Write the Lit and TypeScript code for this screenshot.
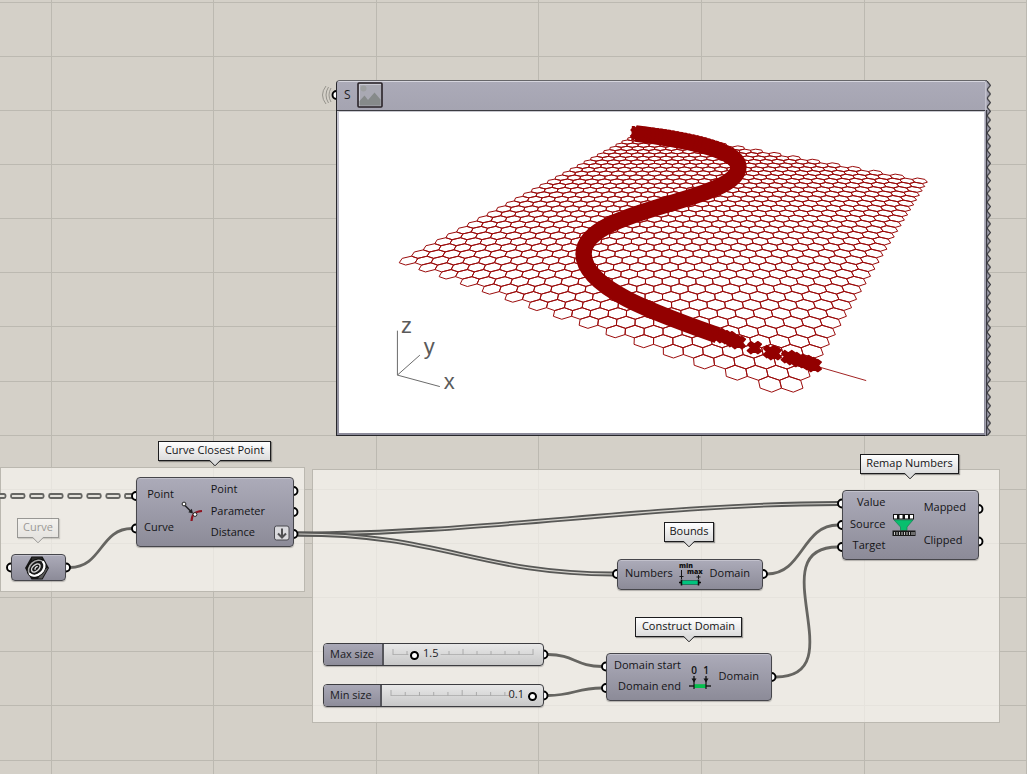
import { LitElement, html, svg, css } from "lit";
import { customElement, property } from "lit/decorators.js";
import { styleMap } from "lit/directives/style-map.js";

type Pt = [number, number];

/* Least-squares plane-to-screen projection through pairs of world and screen points. */
function projection(pairs: [Pt, Pt][]): (p: Pt) => Pt {
  const m: number[][] = Array.from({ length: 8 }, () => new Array(9).fill(0));
  const add = (row: number[]) => {
    for (let r = 0; r < 8; r++) for (let c = 0; c < 9; c++) m[r][c] += row[r] * row[c];
  };
  const K = 1 / 50;
  for (const [[wx, wy], [sx, sy]] of pairs) {
    const x = wx * K;
    const y = wy * K;
    const u = (sx - 660) / 300;
    const v = (sy - 260) / 300;
    add([x, y, 1, 0, 0, 0, -u * x, -u * y, u]);
    add([0, 0, 0, x, y, 1, -v * x, -v * y, v]);
  }
  for (let c = 0; c < 8; c++) {
    let best = c;
    for (let r = c + 1; r < 8; r++) if (Math.abs(m[r][c]) > Math.abs(m[best][c])) best = r;
    [m[c], m[best]] = [m[best], m[c]];
    for (let r = 0; r < 8; r++) {
      if (r === c) continue;
      const f = m[r][c] / m[c][c];
      for (let k = c; k < 9; k++) m[r][k] -= f * m[c][k];
    }
  }
  const h = m.map((row, i) => row[8] / row[i]);
  return ([wx, wy]) => {
    const x = wx * K;
    const y = wy * K;
    const w = h[6] * x + h[7] * y + 1;
    return [660 + (300 * (h[0] * x + h[1] * y + h[2])) / w, 260 + (300 * (h[3] * x + h[4] * y + h[5])) / w];
  };
}

const COLS = 30;
const ROWS = 30;
const S3 = Math.sqrt(3);

/* Lowest vertices of the even columns along the near edge. */
const nearEdge: Pt[] = [
  [406, 265],
  [425.7, 272],
  [446, 279.3],
  [467.3, 287],
  [490, 294.3],
  [513.3, 302.7],
  [537.7, 311.3],
  [562.3, 320],
  [588.7, 328.7],
  [615.7, 338.7],
  [644.3, 348.3],
  [674.3, 358.7],
  [705.3, 369.7],
  [737.7, 380.7],
  [771.7, 392.7],
];

/* Outer vertices of the last column: row number and screen point. */
const farRight: [number, Pt][] = [
  [0, [803.3, 388]],
  [3, [823.3, 355.3]],
  [5, [836, 334.7]],
  [7, [847, 316.3]],
  [10, [862.3, 291.3]],
  [12, [871.7, 276.3]],
  [15, [884, 254.7]],
  [18, [895.3, 237]],
  [22, [909.3, 215.3]],
  [29, [928.7, 182.7]],
];

/* Highest points of the odd columns along the far edge. */
const farEdge: [number, Pt][] = [
  [27, [900, 175.5]],
  [23, [856.7, 167.3]],
  [19, [815, 159.7]],
  [15, [776.7, 152.5]],
  [9, [725, 143.5]],
];

const project = projection([
  [[0.5, 0], [398.7, 262.7]],
  ...nearEdge.map((s, k): [Pt, Pt] => [[1.5 + 3 * k, 0], s]),
  ...farRight.map(([j, s]): [Pt, Pt] => [[45.5, S3 * (j + 1)], s]),
  ...farEdge.map(([c, s]): [Pt, Pt] => [[1 + 1.5 * c, S3 * (ROWS + 0.5)], s]),
]);

function hexMesh(): string {
  let d = "";
  for (let i = 0; i < COLS; i++) {
    for (let j = 0; j < ROWS; j++) {
      const cx = 1 + 1.5 * i;
      const cy = S3 * (j + 0.5) + (i % 2 ? S3 / 2 : 0);
      const pts = [0, 1, 2, 3, 4, 5].map((k) => {
        const a = (k * Math.PI) / 3;
        const [x, y] = project([cx + Math.cos(a), cy + Math.sin(a)]);
        return `${x.toFixed(1)} ${y.toFixed(1)}`;
      });
      d += `M${pts.join("L")}Z`;
    }
  }
  return d;
}

/* A cross shaped cluster left by one oversized cell. */
function cluster(x: number, y: number): string {
  const arms: Pt[] = [
    [-6.5, -3],
    [-3.5, -6],
    [0, -3.5],
    [3.5, -6],
    [7, -3.5],
    [4, 0],
    [7, 3.5],
    [3.5, 6],
    [0, 3.5],
    [-3.5, 6],
    [-7, 3],
    [-3.5, 0],
  ];
  return `M${arms.map(([a, b]) => `${x + a} ${y + b}`).join("L")}Z`;
}

@customElement("gh-viewport")
export class GhViewport extends LitElement {
  static styles = css`
    :host {
      display: block;
      position: relative;
    }
    .frame {
      margin-right: 4px;
      border: 1px solid #26262b;
      border-top-color: #66666a;
      border-radius: 4px 0 0 0;
      background: #9b9aa8;
      overflow: hidden;
    }
    .head {
      display: flex;
      align-items: center;
      gap: 6px;
      height: 25px;
      padding: 0 7px 3px;
      border-top: 1px solid #d6d5de;
      border-bottom: 1px solid #3b3b42;
      background: linear-gradient(#abaab8, #a5a4b1);
      font-size: 12px;
      line-height: 16px;
      color: #1c1c20;
    }
    .head svg {
      display: block;
      width: 26px;
      height: 26px;
    }
    .view {
      padding: 0 2px 2px;
      border-top: 1px solid #c8c8cf;
      background: linear-gradient(#c8c7d3, #8c8b9a);
    }
    .scene {
      display: block;
      width: 100%;
      background: #fff;
    }
    .teeth {
      position: absolute;
      top: 1px;
      right: 0;
      width: 6px;
      height: calc(100% - 1px);
    }
    .axis {
      font: 22px "Liberation Sans", Arial, sans-serif;
      fill: #5a5a5a;
    }
  `;

  render() {
    return html`
      <div class="frame">
        <div class="head">
          <span>S</span>
          <svg viewBox="0 0 26 26" aria-hidden="true">
            <rect x="1" y="1" width="24" height="24" rx="1" fill="#a9a9b3" stroke="#2a2328" stroke-width="1.6" />
            <path d="M2.500 24V2.500H24" fill="none" stroke="#c9c9d2" />
            <circle cx="6.500" cy="6.500" r="3" fill="#9d9fa0" />
            <path d="M2.500 19L7.500 13.500 11 18 17.500 10.500 23.500 17.500V23.500H2.500Z" fill="#868a8a" />
          </svg>
        </div>
        <div class="view">
          <svg class="scene" viewBox="339 112 646 321" role="img" aria-label="Hexagon grid preview">
            <path d=${hexMesh()} fill="none" stroke="#9a0a0a" stroke-width="1" stroke-linejoin="round" />
            <path d="M815 366L867 381" stroke="#960a0a" stroke-width="0.9" />
            <path
              d="M636 133.500C672 138 739 148 739 167C739 202 584 208 584 254C584 289 660 315 718 335.500"
              fill="none"
              stroke="#930000"
              stroke-width="16.500"
            />
            <path
              d="M632 133C660 134 700 141 722 150"
              fill="none"
              stroke="#930000"
              stroke-width="14"
              stroke-dasharray="3 1"
            />
            <g fill="#930000" stroke="#930000" stroke-width="1.500" stroke-linejoin="round">
              ${[
                [638, 133],
                [719, 335],
                [724, 337],
                [729, 338],
                [734, 341],
                [739, 343],
                [755, 348],
                [771, 352],
                [775, 354],
                [789, 357],
                [794, 359],
                [800, 361],
                [806, 362],
                [811, 364],
                [815, 366],
              ].map(([x, y]) => svg`<path d=${cluster(x, y)} />`)}
              <path d="M786 353L816 360 818 370 806 368 785 361Z" />
              <path d="M722 331L740 337 742 348 722 342ZM769 348L777 350 777 358 769 356Z" />
            </g>
            <path d="M397.500 331V375.500L440 387M397.500 375.500L420 355.500" fill="none" stroke="#6a6a6a" />
            <text class="axis" x="401" y="333">z</text>
            <text class="axis" x="424" y="354">y</text>
            <text class="axis" x="444" y="389">x</text>
          </svg>
        </div>
      </div>
      <svg class="teeth" aria-hidden="true">
        <defs>
          <pattern id="tooth" width="6" height="8.660" patternUnits="userSpaceOnUse">
            <path d="M0 0H2L5.500 4.330 2 8.660H0Z" fill="#a3a2b0" />
            <path d="M2 0L5.500 4.330 2 8.660" fill="none" stroke="#3a3a3f" stroke-width="1.200" />
          </pattern>
        </defs>
        <rect width="6" height="100%" fill="url(#tooth)" />
        <rect x="1" y="29" width="1.200" height="100%" fill="#3a3a42" />
        <rect y="1" width="1.500" height="28" fill="#c3c2cd" />
      </svg>
    `;
  }
}

@customElement("gh-component")
export class GhComponent extends LitElement {
  @property({ attribute: false }) inputs: string[] = [];
  @property({ attribute: false }) outputs: string[] = [];
  @property({ attribute: false }) icon: unknown = null;
  @property({ type: Boolean }) flatten = false;

  static styles = css`
    :host {
      display: block;
      box-sizing: border-box;
      border: 1px solid #46464b;
      border-radius: 4px;
      background: linear-gradient(#acabb9, #8c8b98);
      box-shadow: inset 0 1px 0 #c2c1cc, 0 1px 1px rgba(0, 0, 0, 0.25);
      color: #141417;
      font-size: 11px;
    }
    .body {
      display: flex;
      align-items: center;
      justify-content: space-between;
      box-sizing: border-box;
      height: 100%;
      padding: 0 12px 3px 7px;
    }
    .column {
      display: flex;
      flex-direction: column;
      align-self: stretch;
    }
    .inputs {
      align-items: flex-end;
    }
    .param {
      display: flex;
      flex: 1;
      align-items: center;
      min-height: 21px;
      line-height: 16px;
    }
    .glyph {
      display: flex;
      margin-top: 2px;
    }
    .glyph svg {
      overflow: visible;
    }
    .flat {
      width: 16px;
      height: 16px;
      margin: 2px -9px 0 19px;
    }
    .single {
      justify-content: center;
      padding: 0 3px 2px 0;
    }
  `;

  render() {
    if (!this.inputs.length) return html`<div class="body single"><span class="glyph">${this.icon}</span></div>`;
    return html`
      <div class="body">
        <div class="column inputs">${this.inputs.map((t) => html`<span class="param">${t}</span>`)}</div>
        <span class="glyph">${this.icon}</span>
        <div class="column">
          ${this.outputs.map(
            (t, i) => html`<span class="param"
              >${t}${this.flatten && i === this.outputs.length - 1
                ? html`<svg class="flat" viewBox="0 0 16 16" aria-hidden="true">
                    <rect x="0.500" y="1" width="14.500" height="14" rx="2" fill="#d9d9dd" stroke="#4a4a50" />
                    <path d="M8 3.500V12M4 8.500L8 12.500 12 8.500" fill="none" stroke="#4f4f52" stroke-width="2" />
                  </svg>`
                : ""}</span
            >`,
          )}
        </div>
      </div>
    `;
  }
}

@customElement("gh-slider")
export class GhSlider extends LitElement {
  @property() label = "";
  @property({ type: Number }) max = 10;
  @property({ type: Number }) value = 0;

  static styles = css`
    :host {
      display: flex;
      box-sizing: border-box;
      border: 1px solid #3c3c40;
      border-radius: 4px;
      background: linear-gradient(#e8e8e8, #c8c8c8);
      box-shadow: 0 1px 1px rgba(0, 0, 0, 0.25);
      color: #1b1b1e;
      font-size: 11px;
      overflow: hidden;
    }
    label {
      display: flex;
      align-items: center;
      padding: 0 8px 2px 6px;
      border-right: 2px solid #55555b;
      background: linear-gradient(#a9a8b6, #8e8d9a);
      white-space: nowrap;
    }
    .track {
      position: relative;
      flex: 1;
      margin: 0 10px 0 9px;
    }
    .ticks {
      display: block;
      width: 100%;
      height: 100%;
      overflow: visible;
    }
    input {
      position: absolute;
      top: 0;
      left: -4px;
      width: calc(100% + 8px);
      height: 100%;
      margin: 0;
      background: none;
      appearance: none;
      -webkit-appearance: none;
    }
    input::-webkit-slider-thumb {
      -webkit-appearance: none;
      box-sizing: border-box;
      width: 9px;
      height: 9px;
      margin-top: 1px;
      border: 2px solid #000;
      border-radius: 50%;
      background: #fff;
    }
    output {
      position: absolute;
      top: 1px;
      line-height: 16px;
      padding: 0 1px;
    }
  `;

  render() {
    const ratio = this.value / this.max;
    const right = ratio > 0.5;
    const gap = (i: number) => {
      const r = i / 10;
      return right ? r > ratio - 0.16 : r > ratio - 0.04 && r < ratio + 0.19;
    };
    const place = right ? { right: `calc(${(1 - ratio) * 100}% + 8px)` } : { left: `calc(${ratio * 100}% + 8px)` };
    const last = right ? "83%" : "100%";
    return html`
      <label for="range">${this.label}</label>
      <div class="track">
        <svg class="ticks" aria-hidden="true">
          <line x1="0" x2=${right ? last : `${ratio * 100 - 4}%`} y1="10.500" y2="10.500" stroke="#b4b4b4" />
          ${right ? "" : svg`<line x1="34%" x2="100%" y1="10.500" y2="10.500" stroke="#b4b4b4" />`}
          ${[0, 1, 2, 3, 4, 5, 6, 7, 8, 9, 10].map((i) =>
            gap(i)
              ? ""
              : svg`<line x1=${`${i * 10}%`} x2=${`${i * 10}%`} y1=${i % 5 ? 7 : 5} y2="11" stroke="#aaaaaa" />`,
          )}
        </svg>
        <input id="range" type="range" min="0" .max=${String(this.max)} step="any" .value=${String(this.value)} />
        <output for="range" style=${styleMap(place)}>${this.value}</output>
      </div>
    `;
  }
}

const closestIcon = svg`<svg width="22" height="22" viewBox="0 0 22 22">
  <path d="M10.500 20C11 13 14 10.500 21 10" fill="none" stroke="#8f1420" stroke-width="2.200"/>
  <path d="M3 3.500L10.500 11" stroke="#1d1d1f" stroke-width="1.400"/>
  <path d="M12 12.500L7.300 11.200 10.800 7.700Z" fill="#1d1d1f"/>
  <circle cx="3" cy="3" r="1.900" fill="#fff" stroke="#222"/>
  <circle cx="14" cy="13.500" r="1.900" fill="#fff" stroke="#222"/>
</svg>`;

const curveIcon = svg`<svg width="26" height="24" viewBox="0 0 26 24">
  <path d="M7.500 0.500H18.500L25 12 18.500 23.500H7.500L1 12Z" fill="#161616"/>
  <path d="M8 1.500H17.500L22 10 8 21Z" fill="#2c2c2c"/>
  <path d="M21 13L24 12 18 22.500 14 22.500Z" fill="#5a5a5a"/>
  <g fill="none" stroke-linecap="round" transform="rotate(-42 12.500 12)">
    <ellipse cx="12.500" cy="12" rx="9.200" ry="7" fill="#1a1a1a" stroke="#0c0c0c" stroke-width="3"/>
    <ellipse cx="12.500" cy="12" rx="9" ry="6.600" stroke="#a8a8a8" stroke-width="1.700"/>
    <path d="M3.500 12A9 6.600 0 0 0 21.500 12" stroke="#fff" stroke-width="2.200"/>
    <ellipse cx="12" cy="11.500" rx="5" ry="3" stroke="#d6d6d6" stroke-width="1.500"/>
    <path d="M10.500 12C11 11 13 10.700 14 11.500" stroke="#f0f0f0" stroke-width="1.200"/>
  </g>
</svg>`;

const boundsIcon = svg`<svg width="26" height="26" viewBox="0 0 26 26">
  <g font-family="Open Sans, sans-serif" font-size="7" font-weight="800" fill="#111">
    <text x="1" y="7">min</text>
    <text x="9" y="13">max</text>
  </g>
  <path d="M3.500 9V18M1.500 15.500H5.500M20.500 14V18M18.500 16H22.500" stroke="#151515"/>
  <path d="M3 19.500H21V23.500H3Z" fill="#00c47e" stroke="#12503c" stroke-width="0.600"/>
  <path d="M3.500 18.500V24.500M20.500 18.500V24.500M1 21.500H4M20 21.500H23" stroke="#0d0d0d" stroke-width="1.500"/>
</svg>`;

const domainIcon = svg`<svg width="22" height="26" viewBox="0 0 22 26">
  <g font-family="Open Sans, sans-serif" font-size="10" font-weight="600" fill="#111" text-anchor="middle">
    <text x="5" y="10">0</text>
    <text x="17" y="10">1</text>
  </g>
  <path d="M5 12V18M17 12V18" stroke="#111" stroke-width="1.300"/>
  <path d="M2.500 14.500H7.500L5 18.500ZM14.500 14.500H19.500L17 18.500Z" fill="#111"/>
  <path d="M0 22H22" stroke="#161616" stroke-width="1.400"/>
  <path d="M5 20.200H17V24H5Z" fill="#05bf4d"/>
  <path d="M5 18V25M17 18V25" stroke="#111" stroke-width="1.200"/>
</svg>`;

const remapIcon = svg`<svg width="24" height="24" viewBox="0 0 24 24">
  <rect x="1" y="1" width="21" height="5.500" fill="#111"/>
  <path d="M2 2H5V5.500H2ZM7.500 2H10.500V5.500H7.500ZM13 2H16V5.500H13ZM18 2H21V5.500H18Z" fill="#fff"/>
  <path d="M2 7H21L15 14V17.500H8.500V14Z" fill="#08bf6e" stroke="#178052" stroke-width="0.700"/>
  <rect x="0.500" y="17.500" width="23" height="5.500" fill="#1a1a1a"/>
  <path d="M2.500 19V22M5 19V22M7.500 19V22M10 19V22M12.500 19V22M15 19V22M17.500 19V22M20 19V22M22 19V22" stroke="#c4c4c4"/>
</svg>`;

const range = (start: number, step: number, count: number) => Array.from({ length: count }, (_, i) => start + i * step);

const px = (left: number, top: number, width?: number, height?: number) =>
  styleMap({
    left: `${left}px`,
    top: `${top}px`,
    ...(width ? { width: `${width}px` } : {}),
    ...(height ? { height: `${height}px` } : {}),
  });

const groups = [
  { x: 0, y: 467, w: 305, h: 125 },
  { x: 312, y: 469, w: 688, h: 254 },
];

const nodes = [
  { x: 136, y: 477, w: 158, h: 70, inputs: ["Point", "Curve"], outputs: ["Point", "Parameter", "Distance"], icon: closestIcon, flatten: true },
  { x: 11, y: 554, w: 55, h: 27, inputs: [], outputs: [], icon: curveIcon },
  { x: 617, y: 559, w: 146, h: 31, inputs: ["Numbers"], outputs: ["Domain"], icon: boundsIcon },
  { x: 606, y: 653, w: 166, h: 48, inputs: ["Domain start", "Domain end"], outputs: ["Domain"], icon: domainIcon },
  { x: 842, y: 490, w: 137, h: 70, inputs: ["Value", "Source", "Target"], outputs: ["Mapped", "Clipped"], icon: remapIcon },
];

const tags = [
  { x: 158, y: 441, w: 113, text: "Curve Closest Point" },
  { x: 17, y: 518, w: 42, text: "Curve", faded: true },
  { x: 664, y: 522, w: 50, text: "Bounds" },
  { x: 635, y: 617, w: 107, text: "Construct Domain" },
  { x: 860, y: 454, w: 99, text: "Remap Numbers" },
];

const ports: Pt[] = [
  [136, 496],
  [136, 528.5],
  [293.5, 491],
  [293.5, 512],
  [293.5, 534],
  [11, 567.5],
  [66, 567.5],
  [617, 574],
  [763, 574],
  [606, 666.5],
  [606, 688],
  [771.5, 677],
  [842, 503.5],
  [842, 525],
  [842, 547],
  [978.5, 509],
  [978.5, 541.5],
  [543.5, 654.5],
  [543.5, 695.5],
  [336.5, 95],
];

const listWires = ["M298 534C480 534 655 503.500 838 503.500", "M298 534C440 534 480 574 613 574"];
const itemWires = [
  "M70 567.500C102 567.500 100 528.500 132 528.500",
  "M767 574C803 574 802 525 838 525",
  "M776 677C856 677 758 547 838 547",
  "M548 654.500C574 654.500 576 666.500 602 666.500",
  "M548 695.500C574 695.500 576 688 602 688",
];

@customElement("app-root")
export class AppRoot extends LitElement {
  static styles = css`
    :host {
      display: block;
      font-family: "Open Sans", "Noto Sans", sans-serif;
    }
    .canvas {
      position: relative;
      min-height: 100vh;
      background: #d4d0c8;
      overflow: hidden;
    }
    .layer {
      position: absolute;
      inset: 0;
      width: 100%;
      height: 100%;
    }
    .group {
      position: absolute;
      box-sizing: border-box;
      border: 1px solid #bbb8b0;
      background: rgba(248, 245, 239, 0.7);
    }
    .node {
      position: absolute;
    }
    .tag {
      position: absolute;
      box-sizing: border-box;
      height: 20px;
      border: 1px solid #1c1c1e;
      background: linear-gradient(#fff, #dcdcdc);
      box-shadow: 1px 1px 1px rgba(0, 0, 0, 0.35);
      color: #141416;
      font-size: 11px;
      line-height: 16px;
      text-align: center;
      white-space: nowrap;
    }
    .tag svg {
      position: absolute;
      top: 18px;
      left: calc(50% - 6px);
      width: 12px;
      height: 7px;
    }
    .faded {
      opacity: 0.4;
    }
  `;

  render() {
    return html`
      <main class="canvas">
        <svg class="layer" aria-hidden="true">
          <g stroke="#bcb9b1">
            ${range(51.3, 162.55, 20).map((x) => svg`<line x1=${Math.floor(x) + 0.5} x2=${Math.floor(x) + 0.5} y1="0" y2="100%" />`)}
            ${range(2, 54.15, 40).map((y) => svg`<line x1="0" x2="100%" y1=${Math.floor(y) + 0.5} y2=${Math.floor(y) + 0.5} />`)}
          </g>
        </svg>
        ${groups.map((g) => html`<div class="group" style=${px(g.x, g.y, g.w, g.h)}></div>`)}
        <svg class="layer" aria-hidden="true">
          <g fill="#e4e2dc" stroke="#666663" stroke-width="1.800">
            ${range(-9, 19.05, 7).map((x) => svg`<rect x=${x + 1} y="494" width="13.500" height="4" rx="1.500" />`)}
            <path d="M132 494H126Q125 494 125 496T126 498H132" />
          </g>
          <g fill="none">
            ${listWires.map((d) => svg`<path d=${d} stroke="#585856" stroke-width="4.800" /><path d=${d} stroke="#d5d3cd" stroke-width="1.200" />`)}
            ${itemWires.map((d) => svg`<path d=${d} stroke="#666561" stroke-width="2.800" />`)}
          </g>
          <g fill="#fff" stroke="#000" stroke-width="1.900">
            ${ports.map(([x, y]) => svg`<circle cx=${x} cy=${y} r="4" />`)}
          </g>
          <g fill="none" stroke="#8e8c86" stroke-width="0.900">
            <path d="M331 88Q327 95 331 102" />
            <path d="M328.500 87Q323.500 95 328.500 103" />
            <path d="M326 86Q319 95 326 104" />
          </g>
        </svg>

        <gh-viewport class="node" style=${px(336, 80, 655)}></gh-viewport>

        ${tags.map(
          (t) => html`<div class="tag ${t.faded ? "faded" : ""}" style=${px(t.x, t.y, t.w)}>
            ${t.text}<svg viewBox="0 0 12 7" aria-hidden="true">
              <path d="M0.500 0L6 5.800 11.500 0Z" fill="#dcdcdc" />
              <path d="M0.500 0.300L6 5.800 11.500 0.300" fill="none" stroke="#1c1c1e" />
            </svg>
          </div>`,
        )}
        ${nodes.map(
          (n) => html`<gh-component
            class="node"
            style=${px(n.x, n.y, n.w, n.h)}
            .inputs=${n.inputs}
            .outputs=${n.outputs}
            .icon=${n.icon}
            ?flatten=${!!n.flatten}
          ></gh-component>`,
        )}
        <gh-slider class="node" style=${px(323, 643, 221, 23)} label="Max size" .max=${10} .value=${1.5}></gh-slider>
        <gh-slider class="node" style=${px(323, 684, 221, 23)} label="Min size" .max=${0.1} .value=${0.1}></gh-slider>
      </main>
    `;
  }
}
